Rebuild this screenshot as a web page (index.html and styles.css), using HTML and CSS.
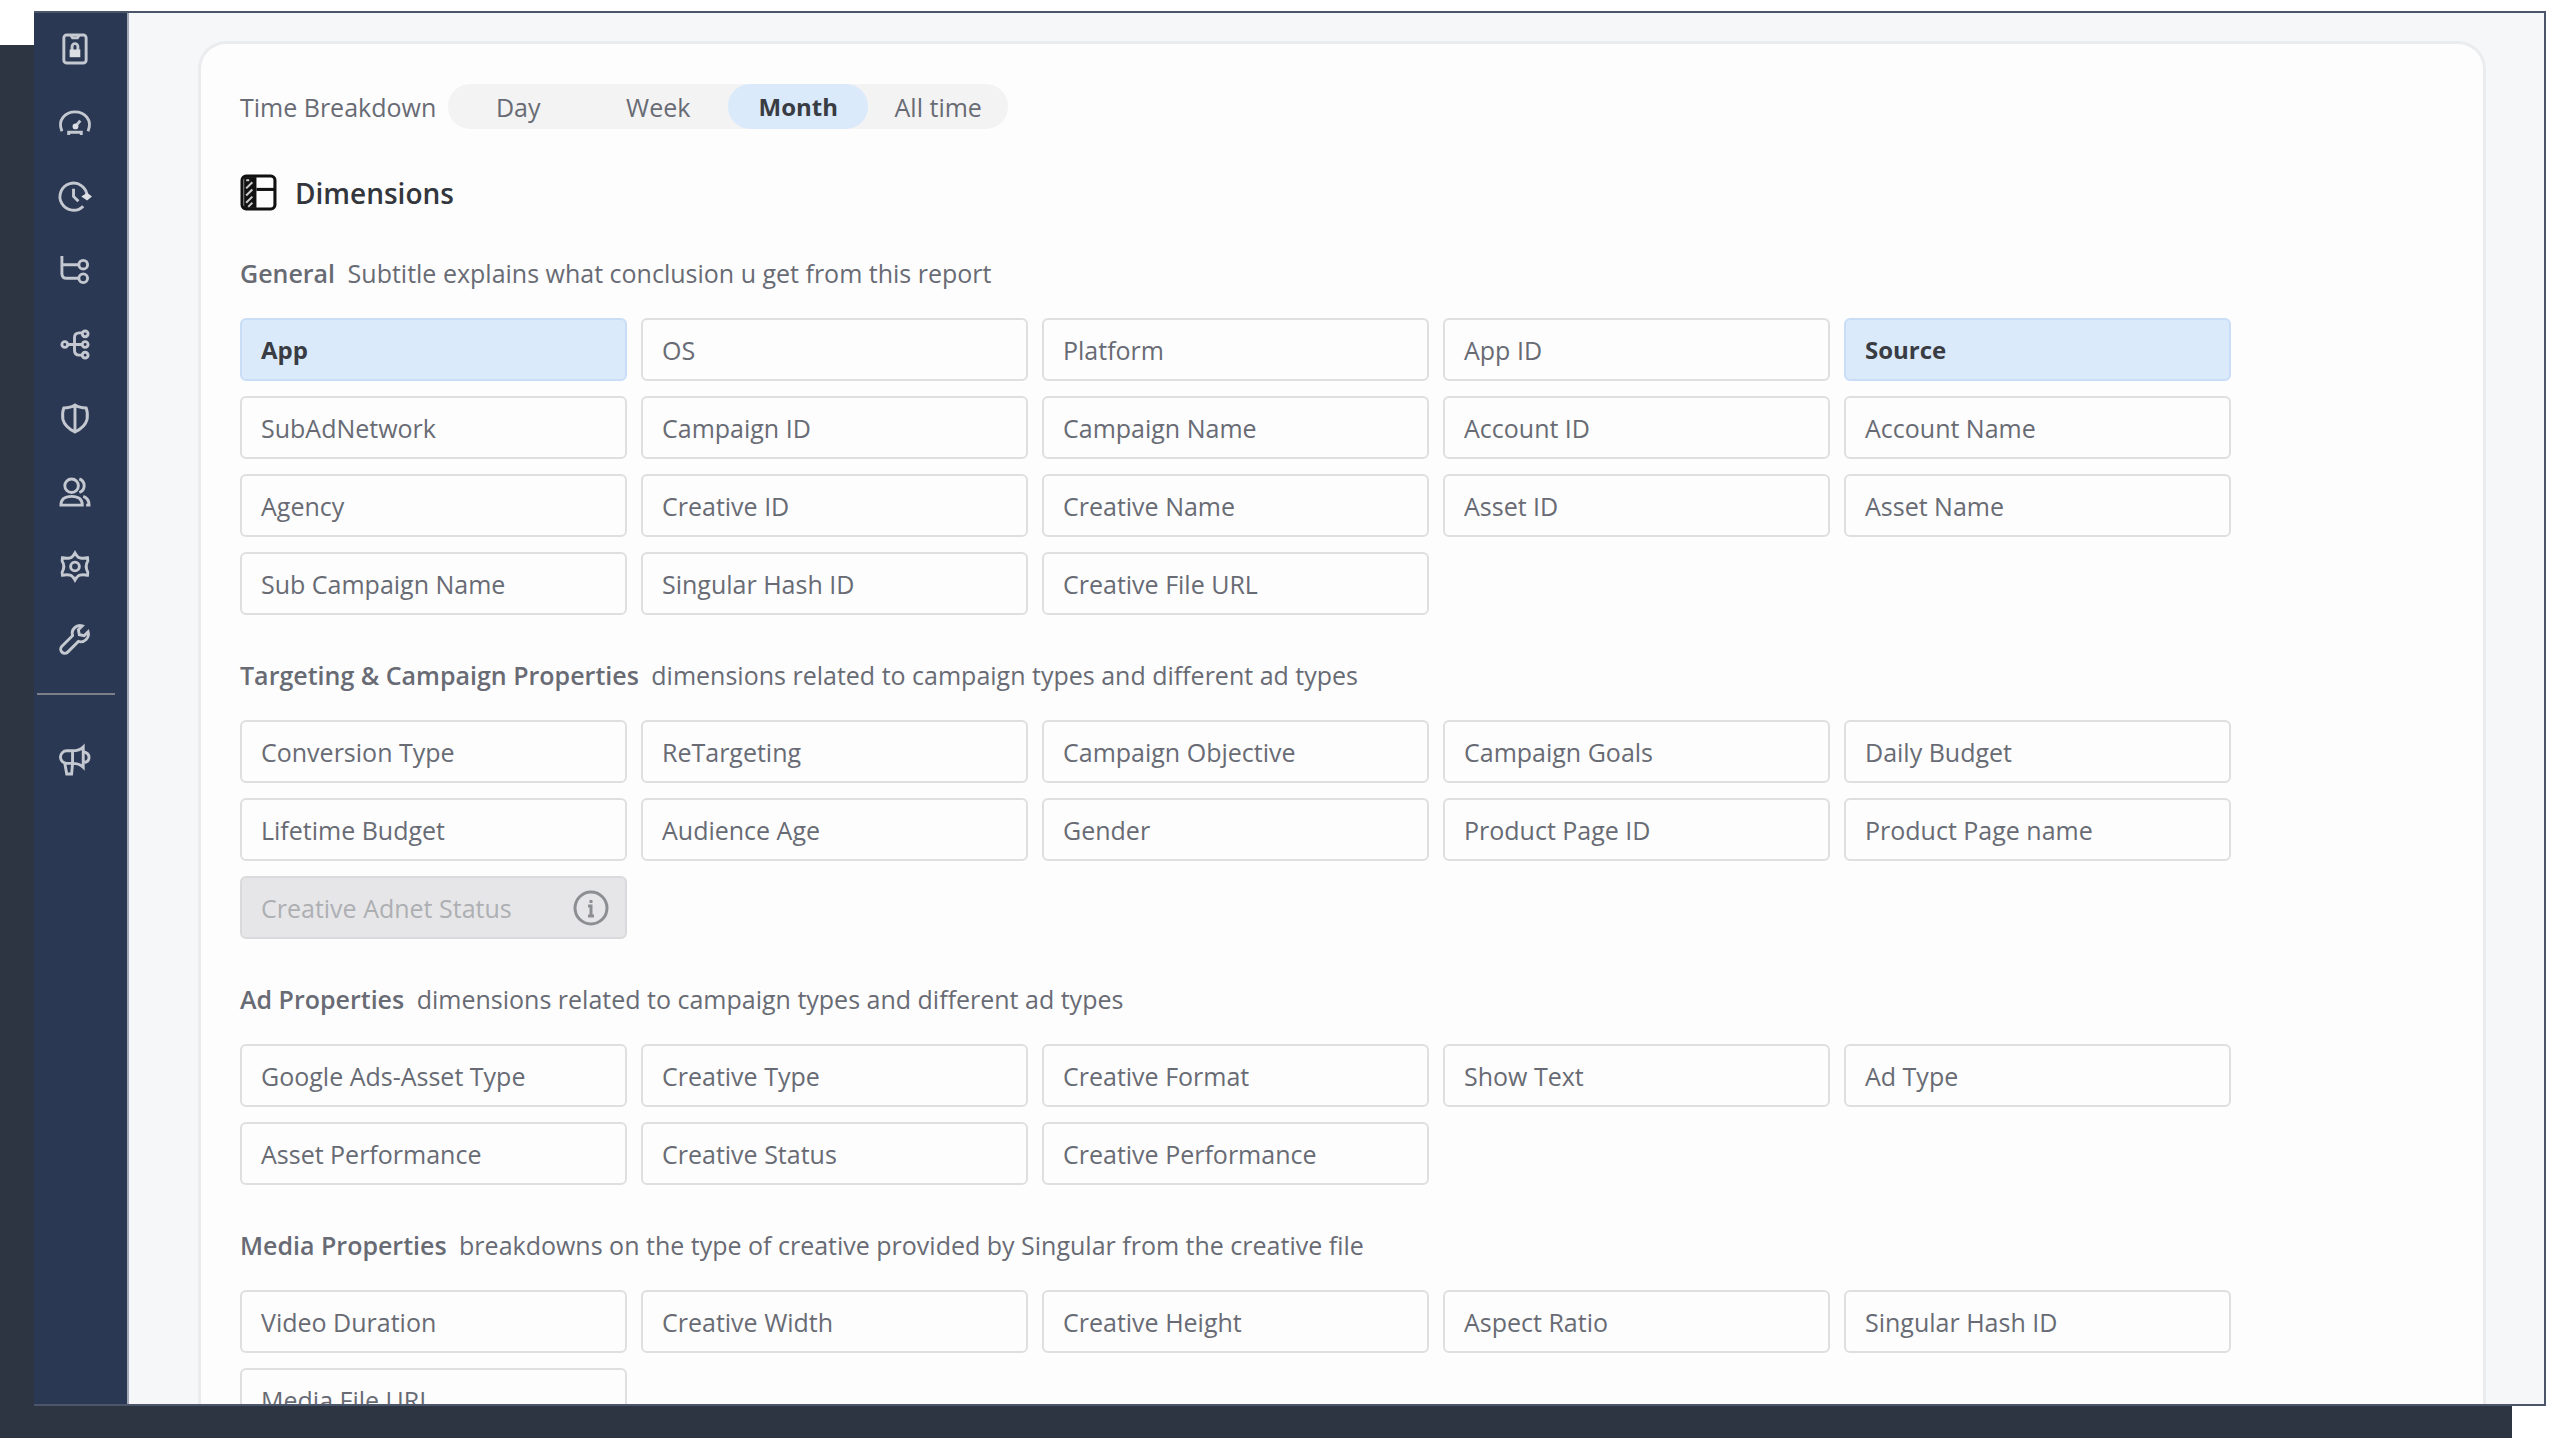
FILE: index.html
```
<!DOCTYPE html>
<html lang="en">
<head>
    <meta charset="UTF-8">
    <meta name="viewport" content="width=device-width, initial-scale=1.0">
    <title>Creative Report</title>
    <link rel="stylesheet" href="styles.css">
</head>
<body>
    <div class="window">
        <nav class="sidebar">
            <a href="#" aria-label="Privacy"><svg viewBox="0 0 32 32"><rect x="5" y="2" width="23" height="29" rx="3"/><path d="M12 2l2 3h5l2-3"/><path d="M13.500 18v-4a3 3 0 0 1 6 0v4"/><rect class="solid" x="11" y="17" width="11" height="8"/></svg></a>
            <a href="#" aria-label="Dashboards"><svg viewBox="0 0 32 32"><path d="M3 25C-2 13 7 5 16.500 5S35 13 30 25M10 29v-3h13v3"/><path d="M17 20l5-6"/><circle class="solid" cx="17" cy="20" r="3"/></svg></a>
            <a href="#" aria-label="History"><svg viewBox="0 0 32 32"><path d="M29 16a14 14 0 1 0-4 10M15 8v8l5 5"/><path class="solid" d="M23 16l6-4 5 4-5 4z"/></svg></a>
            <a href="#" aria-label="Sources"><svg viewBox="0 0 32 32"><path d="M3 1v18q0 5 5 5h12M3 10h17"/><circle cx="25" cy="10" r="4.500"/><circle cx="25" cy="24" r="4.500"/></svg></a>
            <a href="#" aria-label="Attribution"><svg viewBox="0 0 32 32"><path d="M8 16h16M24 4h-3q-5 0-5 5v13q0 5 5 5h3"/><circle cx="6" cy="16" r="3"/><circle cx="27" cy="5" r="3"/><circle cx="27" cy="16" r="3"/><circle cx="27" cy="27" r="3"/></svg></a>
            <a href="#" aria-label="Fraud"><svg viewBox="0 0 32 32"><path d="M16.500 2Q21 5 28 5q2 5 1 12-2 8-12.500 13Q6 25 4 17q-1-7 1-12 7 0 11.500-3zM16.500 2v28"/></svg></a>
            <a href="#" aria-label="Audiences"><svg viewBox="0 0 32 32"><circle cx="13" cy="9" r="7"/><path d="M2 29q0-9 11-9t11 9zM21 2q5 2 5 7t-5 7M25 20q6 2 6 9h-3"/></svg></a>
            <a href="#" aria-label="Settings"><svg viewBox="0 0 32 32"><path d="M16.500 2q3 5 5 5 3 1 8 0 1 3-1 6-1 3 0 6 2 3 1 6-5-1-8 0-2 0-5 5-3-5-5-5-3-1-8 0-1-3 1-6 1-3 0-6-2-3-1-6 5 1 8 0 2 0 5-5z"/><circle cx="16.500" cy="16" r="4.500"/></svg></a>
            <a href="#" aria-label="Tools"><svg viewBox="0 0 32 32"><path d="M24 1a8 8 0 0 0-10 10L3 22a4 4 0 0 0 6 6l11-11A8 8 0 0 0 30 7l-4 4-5-1-1-5z"/></svg></a>
            <hr>
            <a href="#" aria-label="News"><svg viewBox="0 0 32 32"><path d="M14 6H8a6 6 0 0 0 0 13h6zM14 6q7 0 11-4v21q-4-4-11-4M25 7q6 1 6 6t-6 5M6 19l2 11h5l1-11"/></svg></a>
        </nav>
        <main class="content">
            <div class="card">
                <div class="time">
                    <span>Time Breakdown</span>
                    <div class="segments">
                        <button>Day</button>
                        <button>Week</button>
                        <button class="active">Month</button>
                        <button>All time</button>
                    </div>
                </div>
                <h1><svg viewBox="0 0 36 36"><rect x="2" y="2" width="32" height="32" rx="4"/><path class="solid" d="M4 3h12v30H4z"/><path d="M16 15h18"/><path class="stripe" d="M6 6h3M6 14l6-6M6 21l6-6M6 28l6-6M8 32l4-4"/></svg>Dimensions</h1>

                <h2>General <span>Subtitle explains what conclusion u get from this report</span></h2>
                <div class="chips">
                    <button class="active">App</button>
                    <button>OS</button>
                    <button>Platform</button>
                    <button>App ID</button>
                    <button class="active">Source</button>
                    <button>SubAdNetwork</button>
                    <button>Campaign ID</button>
                    <button>Campaign Name</button>
                    <button>Account ID</button>
                    <button>Account Name</button>
                    <button>Agency</button>
                    <button>Creative ID</button>
                    <button>Creative Name</button>
                    <button>Asset ID</button>
                    <button>Asset Name</button>
                    <button>Sub Campaign Name</button>
                    <button>Singular Hash ID</button>
                    <button>Creative File URL</button>
                </div>

                <h2>Targeting &amp; Campaign Properties <span>dimensions related to campaign types and different ad types</span></h2>
                <div class="chips">
                    <button>Conversion Type</button>
                    <button>ReTargeting</button>
                    <button>Campaign Objective</button>
                    <button>Campaign Goals</button>
                    <button>Daily Budget</button>
                    <button>Lifetime Budget</button>
                    <button>Audience Age</button>
                    <button>Gender</button>
                    <button>Product Page ID</button>
                    <button>Product Page name</button>
                    <button disabled>Creative Adnet Status <svg viewBox="0 0 36 36"><circle cx="18" cy="18" r="16"/><path d="M15 16h3v9M15 26h6M18 10v3"/></svg></button>
                </div>

                <h2>Ad Properties <span>dimensions related to campaign types and different ad types</span></h2>
                <div class="chips">
                    <button>Google Ads-Asset Type</button>
                    <button>Creative Type</button>
                    <button>Creative Format</button>
                    <button>Show Text</button>
                    <button>Ad Type</button>
                    <button>Asset Performance</button>
                    <button>Creative Status</button>
                    <button>Creative Performance</button>
                </div>

                <h2>Media Properties <span>breakdowns on the type of creative provided by Singular from the creative file</span></h2>
                <div class="chips">
                    <button>Video Duration</button>
                    <button>Creative Width</button>
                    <button>Creative Height</button>
                    <button>Aspect Ratio</button>
                    <button>Singular Hash ID</button>
                    <button>Media File URL</button>
                </div>
            </div>
        </main>
    </div>
</body>
</html>
```
FILE: styles.css
```
* {
    box-sizing: border-box;
}
body {
    margin: 0;
    height: 100vh;
    overflow: hidden;
    padding: 11px 14px 33px 34px;
    font-family: "Open Sans", sans-serif;
    font-size: 25px;
    line-height: 32px;
    color: #686b74;
    background: #fff;
}
.window {
    display: flex;
    height: 100%;
    overflow: hidden;
    border: 2px solid #4b566b;
    border-left: none;
    background: #f5f7f9;
}
/* dark slab behind the window */
body::before {
    content: "";
    position: absolute;
    z-index: -1;
    left: 0;
    top: 45px;
    right: 48px;
    bottom: 1px;
    background: #2d3543;
}
.sidebar {
    width: 95px;
    flex-shrink: 0;
    display: flex;
    flex-direction: column;
    background: #2a3853;
    border-right: 2px solid #a3a9b6;
}
.sidebar a {
    height: 74px;
    display: flex;
    align-items: center;
    padding: 0 0 4px 25px;
}
.sidebar svg {
    width: 31px;
    height: 31px;
    fill: none;
    stroke: #c4c8d0;
    stroke-width: 3;
    overflow: visible;
}
.sidebar .solid {
    fill: #dcdfe4;
    stroke: none;
}
.sidebar hr {
    width: 78px;
    margin: 14px 0 30px 3px;
    border: none;
    border-top: 2px solid #7d7f88;
}
.content {
    flex: 1;
    padding: 28px 58px 0 69px;
}
.card {
    min-height: 100%;
    padding: 40px 39px;
    border: 3px solid #ebecee;
    border-bottom: none;
    border-radius: 28px 28px 0 0;
    background: #fdfdfd;
}
.time {
    display: flex;
    align-items: center;
    gap: 12px;
}
.segments {
    display: grid;
    grid-template-columns: repeat(4, 140px);
    height: 45px;
    border-radius: 22px;
    background: #f3f3f3;
}
button {
    font: inherit;
    color: inherit;
    cursor: pointer;
}
.segments button {
    border: none;
    border-radius: 22px;
    padding: 0;
    background: none;
}
.segments .active,
.chips .active {
    background: #dbeafb;
    color: #393c43;
    font-size: 24px;
    font-weight: 700;
}
h1 {
    display: flex;
    align-items: center;
    gap: 18px;
    margin: 45px 0 46px;
    font-size: 28px;
    font-weight: 600;
    line-height: 36px;
    color: #33363d;
}
h1 svg {
    width: 37px;
    height: 37px;
    fill: none;
    stroke: #111;
    stroke-width: 3;
}
h1 .solid {
    fill: #111;
    stroke: none;
}
h1 .stripe {
    stroke: #ccc;
    stroke-width: 2;
}
h2 {
    margin: 44px 0 29px;
    font-size: 25px;
    font-weight: 600;
    line-height: 32px;
}
h2 span {
    margin-left: 6px;
    font-weight: 400;
}
.chips {
    display: grid;
    grid-template-columns: repeat(5, 1fr);
    gap: 15px 14px;
    max-width: 1991px;
}
.chips button {
    display: flex;
    align-items: center;
    justify-content: space-between;
    height: 63px;
    padding: 0 16px 0 19px;
    border: 2px solid #dedfe0;
    border-radius: 6px;
    background: #fdfdfd;
}
.chips .active {
    background: #dbeafb;
    border-color: #c9ddf7;
}
.chips button:disabled {
    background: #e6e6e8;
    border-color: #d9dadb;
    color: #adafb3;
}
.chips svg {
    width: 36px;
    height: 36px;
    fill: none;
    stroke: #8c8e92;
    stroke-width: 3;
}
```
